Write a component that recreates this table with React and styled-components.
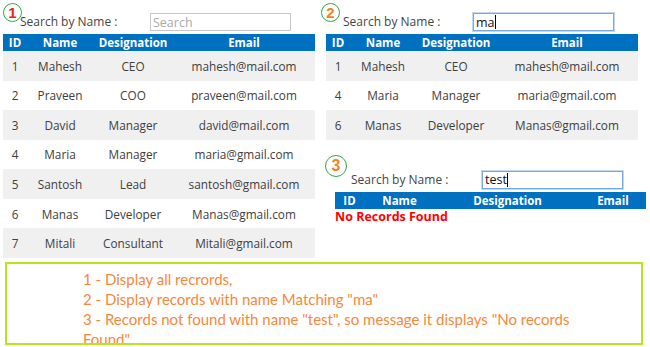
import React from "react";
import styled, { createGlobalStyle } from "styled-components";

const GlobalStyle = createGlobalStyle`
  body {
    margin: 0;
    background: #ffffff;
    font-family: "Open Sans", "Noto Sans", sans-serif;
  }
`;

const Page = styled.div`
  width: 650px;
  height: 347px;
  padding-left: 3px;
  box-sizing: border-box;
  overflow: hidden;
`;

const Top = styled.div`
  display: flex;
  align-items: flex-start;
`;

const RightCol = styled.div`
  display: flex;
  flex-direction: column;
  margin-left: 11px;
`;

const Panel = styled.div`
  position: relative;
  width: ${(p) => p.width}px;
  margin-top: ${(p) => p.top || 0}px;
  margin-left: ${(p) => p.left || 0}px;
`;

const Badge = styled.div`
  position: absolute;
  top: ${(p) => p.y}px;
  left: ${(p) => p.x}px;
  width: ${(p) => p.size}px;
  height: ${(p) => p.size}px;
  box-sizing: border-box;
  border: 1.5px solid #2ea84c;
  border-radius: 50%;
  display: flex;
  align-items: center;
  justify-content: center;
  font-family: "Liberation Sans", Arial, sans-serif;
  font-weight: bold;
  font-size: ${(p) => (p.size > 20 ? 16 : 15)}px;
  color: ${(p) => p.color};
`;

const SearchRow = styled.div`
  display: flex;
  align-items: flex-start;
  height: 34px;
  padding-top: 13px;
  box-sizing: border-box;
`;

const Label = styled.span`
  flex: none;
  width: 147px;
  padding-left: ${(p) => p.indent}px;
  box-sizing: border-box;
  font-size: 12px;
  line-height: 18px;
  color: #444444;
  white-space: nowrap;
`;

const SearchBox = styled.div`
  width: 141px;
  height: 18px;
  box-sizing: border-box;
  border: 1px solid ${(p) => (p.focused ? "#7aa7e0" : "#c8c8c8")};
  box-shadow: ${(p) => (p.focused ? "0 0 0 1px rgba(122,167,224,0.45)" : "none")};
  padding: 0 2px;
  display: flex;
  align-items: center;
  font-size: 12.5px;
  color: ${(p) => (p.empty ? "#a9a9a9" : "#111111")};
`;

const Caret = styled.span`
  display: inline-block;
  width: 1px;
  height: 14px;
  background: #000000;
`;

const HeadRow = styled.div`
  display: grid;
  grid-template-columns: ${(p) => p.cols};
  height: 17px;
  align-items: center;
  background: #0070c0;
  color: #ffffff;
  font-weight: bold;
  font-size: 11.5px;
  text-align: center;
`;

const Row = styled.div`
  display: grid;
  grid-template-columns: ${(p) => p.cols};
  height: 29.57px;
  align-items: center;
  background: ${(p) => (p.shade ? "#f0f0f0" : "#ffffff")};
  color: #404040;
  font-size: 11.8px;
  text-align: center;
`;

const Empty = styled.div`
  color: #ff0000;
  font-weight: bold;
  font-size: 12.5px;
  line-height: 16px;
`;

const NoteBox = styled.div`
  margin: 4px 0 0 2px;
  width: 638px;
  height: 83px;
  box-sizing: border-box;
  border: 2px solid #b5e61d;
  padding: 5px 0 0 76px;
  overflow: hidden;
`;

const NoteText = styled.div`
  width: 510px;
  font-family: Lato, "Open Sans", sans-serif;
  font-size: 15px;
  line-height: 20px;
  color: #f7883a;
`;

const people = [
  [1, "Mahesh", "CEO", "mahesh@mail.com"],
  [2, "Praveen", "COO", "praveen@mail.com"],
  [3, "David", "Manager", "david@mail.com"],
  [4, "Maria", "Manager", "maria@gmail.com"],
  [5, "Santosh", "Lead", "santosh@gmail.com"],
  [6, "Manas", "Developer", "Manas@gmail.com"],
  [7, "Mitali", "Consultant", "Mitali@gmail.com"],
];

const COLS = "24px 66px 80px 1fr";
const COLS_EMPTY = "29px 71px 145px 1fr";

function Grid({ rows, cols }) {
  return (
    <>
      <HeadRow cols={cols}>
        <span>ID</span>
        <span>Name</span>
        <span>Designation</span>
        <span>Email</span>
      </HeadRow>
      {rows.map((r, i) => (
        <Row key={r[0]} cols={cols} shade={i % 2 === 0}>
          {r.map((c) => (
            <span key={c}>{c}</span>
          ))}
        </Row>
      ))}
    </>
  );
}

function Search({ indent, value, focused }) {
  return (
    <SearchRow>
      <Label indent={indent}>Search by Name :</Label>
      <SearchBox focused={focused} empty={!value}>
        {value || "Search"}
        {focused && <Caret />}
      </SearchBox>
    </SearchRow>
  );
}

export default function App() {
  const filtered = people.filter((p) => p[1].toLowerCase().includes("ma"));
  return (
    <Page>
      <GlobalStyle />
      <Top>
        <Panel width={312}>
          <Badge x={0} y={3} size={19} color="#e8231e">
            1
          </Badge>
          <Search indent={17} />
          <Grid rows={people} cols={COLS} />
        </Panel>
        <RightCol>
          <Panel width={312}>
            <Badge x={-5} y={3} size={19} color="#f5821f">
              2
            </Badge>
            <Search indent={17} value="ma" focused />
            <Grid rows={filtered} cols={COLS} />
          </Panel>
          <Panel width={311} top={18} left={9}>
            <Badge x={-10} y={-3} size={22} color="#f5821f">
              3
            </Badge>
            <Search indent={16} value="test" focused />
            <Grid rows={[]} cols={COLS_EMPTY} />
            <Empty>No Records Found</Empty>
          </Panel>
        </RightCol>
      </Top>
      <NoteBox>
        <NoteText>
          1 - Display all recrords,
          <br />2 - Display records with name Matching "ma"
          <br />3 - Records not found with name "test", so message it displays "No records Found"
        </NoteText>
      </NoteBox>
    </Page>
  );
}
